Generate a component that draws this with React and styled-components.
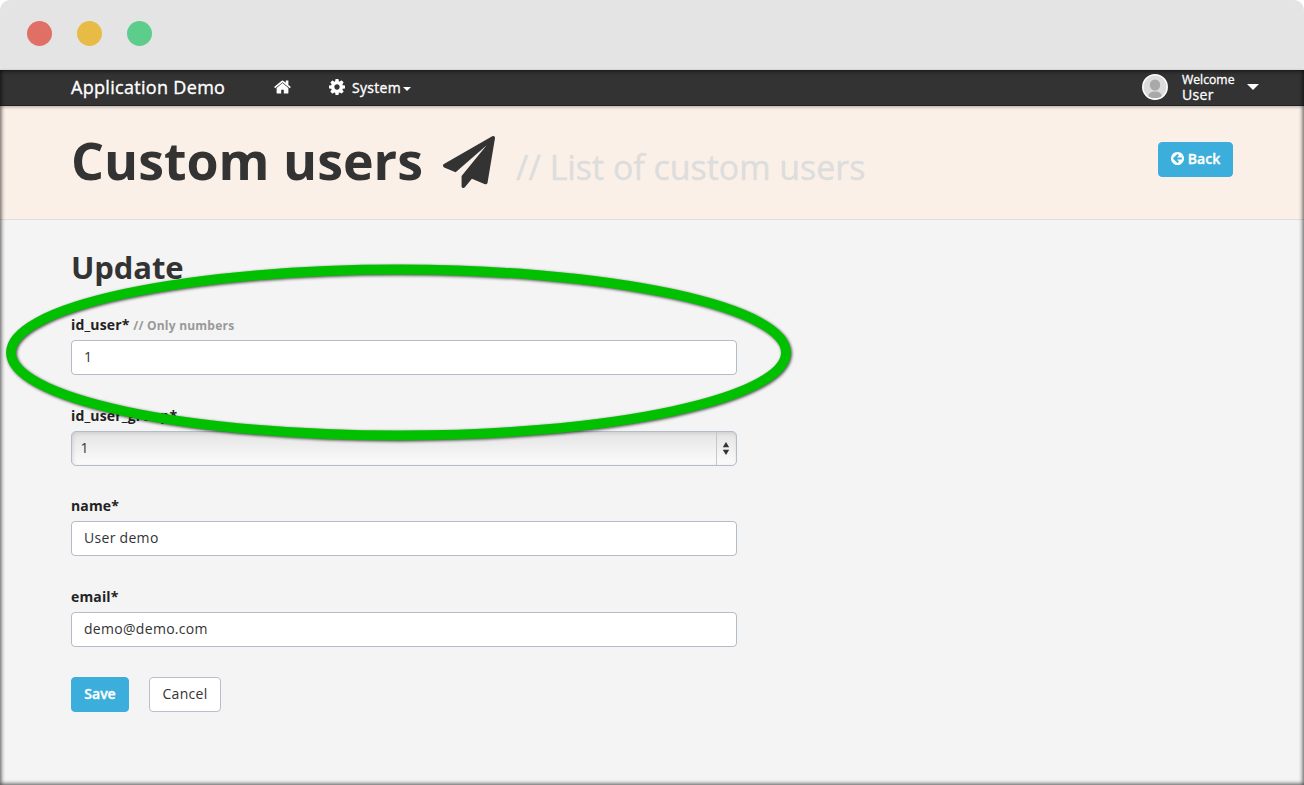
import React from 'react';
import styled, { createGlobalStyle } from 'styled-components';

const GlobalStyle = createGlobalStyle`
  * { box-sizing: border-box; }
  html, body { margin: 0; background: #fff; }
  body, input, button { font-family: 'Open Sans', 'Noto Sans', sans-serif; }
`;

const Window = styled.div`
  width: 1304px;
  height: 785px;
  display: flex;
  flex-direction: column;
  overflow: hidden;
  border-radius: 10px 10px 0 0;
  color: #333;
`;

const TitleBar = styled.div`
  flex: 0 0 70px;
  display: flex;
  align-items: center;
  gap: 25px;
  padding: 0 27px 3px;
  background: #e4e4e4;
`;

const Light = styled.span`
  width: 25px;
  height: 25px;
  border-radius: 50%;
  background: ${(p) => p.$color};
`;

const Page = styled.div`
  position: relative;
  flex: 1;
  display: flex;
  flex-direction: column;
  background: #f4f4f4;
  &::after {
    content: '';
    position: absolute;
    inset: 0;
    z-index: 2;
    box-shadow: inset 0 0 4px 1px rgba(0, 0, 0, 0.7);
    pointer-events: none;
  }
`;

const NavBar = styled.nav`
  flex: 0 0 35px;
  display: flex;
  align-items: center;
  padding: 0 45px 1px 71px;
  background: #333;
  border-bottom: 1px solid #222;
  box-shadow: 0 1px 3px rgba(0, 0, 0, 0.3);
  color: #fff;
  z-index: 1;
`;

const Brand = styled.span`
  width: 203px;
  font-size: 18px;
  line-height: 32px;
  letter-spacing: 0.31px;
  -webkit-text-stroke: 0.35px #fff;
`;

const NavItem = styled.span`
  display: flex;
  align-items: center;
  margin-right: ${(p) => p.$gap || 0}px;
  font-size: 14px;
  line-height: 32px;
  letter-spacing: 0.3px;
  -webkit-text-stroke: 0.35px #fff;
`;

const NavText = styled.span`
  margin-left: 7px;
  padding-top: 2px;
`;

const Caret = styled.span`
  border: ${(p) => p.$size}px solid transparent;
  border-top-color: #fff;
  border-bottom: 0;
  margin-left: ${(p) => p.$gap}px;
  margin-top: ${(p) => p.$drop || 0}px;
`;

const Account = styled.div`
  display: flex;
  align-items: center;
  margin-left: auto;
`;

const Welcome = styled.div`
  display: flex;
  flex-direction: column;
  width: 53px;
  margin: -1px 0 0 14px;
  -webkit-text-stroke: 0.3px #fff;
`;

const WelcomeLine = styled.span`
  font-size: ${(p) => p.$size}px;
  line-height: 15px;
  letter-spacing: ${(p) => p.$spacing || 0}px;
`;

const PageHeader = styled.header`
  flex: 0 0 114px;
  display: flex;
  justify-content: space-between;
  align-items: flex-start;
  padding: 0 71px;
  background: #fbf0e7;
  border-bottom: 1px solid #dedede;
`;

const Title = styled.h1`
  display: flex;
  align-items: baseline;
  margin: 17px 0 0;
  font-size: 51.9px;
  line-height: 74px;
  font-weight: 700;
  white-space: nowrap;
  svg { margin-left: 20px; align-self: flex-start; margin-top: 13px; }
`;

const Subtitle = styled.small`
  margin-left: 21px;
  font-size: 33.9px;
  line-height: 1;
  font-weight: 400;
  color: #ddd;
  -webkit-text-stroke: 0.4px #ddd;
`;

const Button = styled.button`
  display: flex;
  align-items: center;
  justify-content: center;
  gap: 4px;
  width: ${(p) => p.$width}px;
  height: 35px;
  margin-top: ${(p) => p.$top || 0}px;
  padding: 0 0 2px;
  border: 1px solid ${(p) => (p.$primary ? '#3baedb' : '#b8bfca')};
  border-radius: 4px;
  background: ${(p) => (p.$primary ? '#3baedb' : '#fff')};
  color: ${(p) => (p.$primary ? '#fff' : '#333')};
  font-size: 14px;
  letter-spacing: ${(p) => (p.$primary ? 0 : 0.3)}px;
  font-weight: ${(p) => (p.$primary ? 600 : 400)};
  -webkit-text-stroke: ${(p) => (p.$primary ? '0.35px #fff' : '0')};
`;

const Form = styled.form`
  width: 737px;
  padding: 27px 0 0 71px;
`;

const Heading = styled.h2`
  margin: 0 0 26px;
  font-size: 31px;
  line-height: 41px;
  letter-spacing: -0.1px;
  font-weight: 700;
`;

const Field = styled.div`
  height: 90.7px;
`;

const Label = styled.label`
  display: block;
  height: 26px;
  font-size: 14px;
  line-height: 21px;
  letter-spacing: 0.15px;
  font-weight: 700;
  color: #222;
  small { font-size: 12px; letter-spacing: 0.22px; color: #999; }
`;

const Input = styled.input`
  display: block;
  width: 100%;
  height: 35px;
  padding: 0 12px 2px;
  border: 1px solid #b4bcc8;
  border-radius: 4px;
  background: #fff;
  outline: none;
  font-size: 14px;
  letter-spacing: 0.3px;
  color: #333;
`;

const Select = styled.div`
  display: flex;
  justify-content: space-between;
  align-items: center;
  height: 35px;
  padding-left: 8.5px;
  border: 1px solid #b4bcc8;
  border-radius: 5px;
  background: linear-gradient(#e4e4e4, #fcfcfc);
  box-shadow: inset 1px 1px 4px rgba(0, 0, 0, 0.12);
  font-size: 14px;
`;

const SelectValue = styled.span`
  padding-bottom: 2px;
`;

const Stepper = styled.span`
  display: flex;
  align-items: center;
  justify-content: center;
  width: 20px;
  height: 33px;
  padding-right: 1px;
  border-left: 1px solid #c4c8ce;
`;

const Actions = styled.div`
  display: flex;
  gap: 20px;
`;

const Highlight = styled.svg`
  position: absolute;
  left: 0;
  top: 185px;
  overflow: visible;
  filter: drop-shadow(1px 1.5px 1.5px rgba(0, 0, 0, 0.7));
  pointer-events: none;
`;

const PATHS = {
  home: 'M1408 992v480q0 26-19 45t-45 19h-384v-384h-256v384h-384q-26 0-45-19t-19-45v-480q0-1 .5-3t.5-3l575-474 575 474q1 2 1 6zm223-69l-62 74q-8 9-21 11h-3q-13 0-21-7l-692-577-692 577q-12 8-24 7-13-2-21-11l-62-74q-8-10-7-23.5t11-21.5l719-599q32-26 76-26t76 26l244 204v-195q0-14 9-23t23-9h192q14 0 23 9t9 23v408l219 182q10 8 11 21.5t-7 23.5z',
  cog: 'M1024 896q0-106-75-181t-181-75-181 75-75 181 75 181 181 75 181-75 75-181zm512-109v222q0 12-8 23t-20 13l-185 28q-19 54-39 91 35 50 107 138 10 12 10 25t-9 23q-27 37-99 108t-94 71q-12 0-26-9l-138-108q-44 23-91 38-16 136-29 186-7 28-36 28h-222q-14 0-24.5-8.5t-11.5-21.5l-28-184q-49-16-90-37l-141 107q-10 9-25 9-14 0-25-11-126-114-165-168-7-10-7-23 0-12 8-23 15-21 51-66.5t54-70.5q-27-50-41-99l-183-27q-13-2-21-12.5t-8-23.5v-222q0-12 8-23t19-13l186-28q14-46 39-92-40-57-107-138-10-12-10-24 0-10 9-23 26-36 98.5-107.5t94.5-71.5q13 0 26 10l138 107q44-23 91-38 16-136 29-186 7-28 36-28h222q14 0 24.5 8.5t11.5 21.5l28 184q49 16 90 37l142-107q9-9 24-9 13 0 25 10 129 119 165 170 7 8 7 22 0 12-8 23-15 21-51 66.5t-54 70.5q26 50 41 98l183 28q13 2 21 12.5t8 23.5z',
  plane: 'M1764 11q33 24 27 64l-256 1536q-5 29-32 45-14 8-31 8-11 0-24-5l-453-185-242 295q-18 23-49 23-13 0-22-4-19-7-30.5-23.5t-11.5-36.5v-349l864-1059-1069 925-395-162q-37-14-40-55-2-40 32-59l1664-960q15-9 32-9 20 0 36 11z',
  back: 'M1280 960v-128q0-26-19-45t-45-19h-502l189-189q19-19 19-45t-19-45l-91-91q-18-18-45-18t-45 18l-362 362-91 91q-18 18-18 45t18 45l91 91 362 362q18 18 45 18t45-18l91-91q18-18 18-45t-18-45l-189-189h502q26 0 45-19t19-45zm256-64q0 209-103 385.5t-279.5 279.5-385.5 103-385.5-103-279.5-279.5-103-385.5 103-385.5 279.5-279.5 385.5-103 385.5 103 279.5 279.5 103 385.5z',
};

function Icon({ name, box, width, height }) {
  return (
    <svg width={width} height={height} viewBox={box} fill="currentColor" aria-hidden="true">
      <path d={PATHS[name]} />
    </svg>
  );
}

function Avatar() {
  return (
    <svg width="26" height="26" viewBox="0 0 26 26" aria-hidden="true">
      <defs>
        <clipPath id="face"><circle cx="13" cy="13" r="11.3" /></clipPath>
      </defs>
      <circle cx="13" cy="13" r="12.2" fill="#dcdcdc" stroke="#fff" strokeWidth="1.5" />
      <g clipPath="url(#face)" fill="#a9a9a9">
        <ellipse cx="13" cy="11" rx="5.2" ry="5.6" />
        <path d="M6 24c0-5 3-6.500 7-6.500s7 1.500 7 6.500z" />
      </g>
    </svg>
  );
}

export default function App() {
  return (
    <Window>
      <GlobalStyle />
      <TitleBar>
        <Light $color="#e07065" />
        <Light $color="#e7bb45" />
        <Light $color="#5dcd8c" />
      </TitleBar>
      <Page>
        <NavBar>
          <Brand>Application Demo</Brand>
          <NavItem $gap={38}>
            <Icon name="home" box="0 253 1664 1283" width={17} height={14} />
          </NavItem>
          <NavItem>
            <Icon name="cog" box="0 128 1536 1536" width={16} height={16} />
            <NavText>System</NavText>
            <Caret $size={4} $gap={2} $drop={4} />
          </NavItem>
          <Account>
            <Avatar />
            <Welcome>
              <WelcomeLine $size={12.2}>Welcome</WelcomeLine>
              <WelcomeLine $size={14} $spacing={0.3}>User</WelcomeLine>
            </Welcome>
            <Caret $size={6} $gap={12} />
          </Account>
        </NavBar>
        <PageHeader>
          <Title>
            Custom users
            <Icon name="plane" box="0 0 1792 1792" width={52} height={52} />
            <Subtitle>// List of custom users</Subtitle>
          </Title>
          <Button type="button" $primary $width={75} $top={35.5}>
            <Icon name="back" box="0 128 1536 1536" width={13} height={13} />
            Back
          </Button>
        </PageHeader>
        <Form>
          <Heading>Update</Heading>
          <Field>
            <Label>id_user* <small>// Only numbers</small></Label>
            <Input defaultValue="1" />
          </Field>
          <Field>
            <Label>id_user_group*</Label>
            <Select>
              <SelectValue>1</SelectValue>
              <Stepper>
                <svg width="8" height="13" viewBox="0 0 8 13" fill="#333">
                  <path d="M4 0l3.200 5.200H.8zM4 13L.8 7.800h6.400z" />
                </svg>
              </Stepper>
            </Select>
          </Field>
          <Field>
            <Label>name*</Label>
            <Input defaultValue="User demo" />
          </Field>
          <Field>
            <Label>email*</Label>
            <Input defaultValue="demo@demo.com" />
          </Field>
          <Actions>
            <Button type="button" $primary $width={58}>Save</Button>
            <Button type="button" $width={72}>Cancel</Button>
          </Actions>
        </Form>
        <Highlight width="800" height="200" aria-hidden="true">
          <ellipse cx="398.500" cy="97.500" rx="387.500" ry="83" fill="none" stroke="#00c000" strokeWidth="9.800" />
        </Highlight>
      </Page>
    </Window>
  );
}
